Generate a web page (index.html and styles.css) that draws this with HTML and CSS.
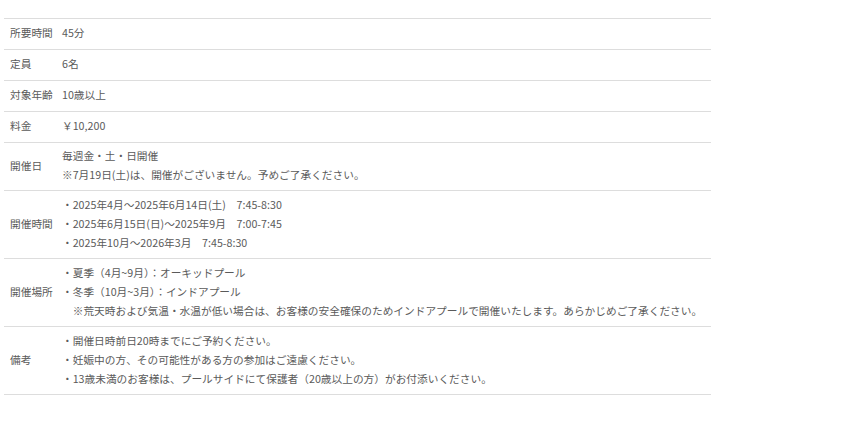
FILE: index.html
```html
<!DOCTYPE html>
<html lang="ja">
<head>
<meta charset="utf-8">
<link rel="stylesheet" href="styles.css">
</head>
<body>
<div class="wrap">
<table class="info">
<tr><th>所要時間</th><td>45分</td></tr>
<tr><th>定員</th><td>6名</td></tr>
<tr><th>対象年齢</th><td>10歳以上</td></tr>
<tr><th>料金</th><td>￥10,200</td></tr>
<tr><th>開催日</th><td class="two">毎週金・土・日開催<br>※7月19日(土)は、開催がございません。予めご了承ください。</td></tr>
<tr><th>開催時間</th><td><ul class="list">
<li>・2025年4月～2025年6月14日(土)　7:45-8:30</li>
<li>・2025年6月15日(日)～2025年9月　7:00-7:45</li>
<li>・2025年10月～2026年3月　7:45-8:30</li>
</ul></td></tr>
<tr><th>開催場所</th><td><ul class="list">
<li>・夏季（4月~9月）：オーキッドプール</li>
<li>・冬季（10月~3月）：インドアプール</li>
<li class="note">※荒天時および気温・水温が低い場合は、お客様の安全確保のためインドアプールで開催いたします。あらかじめご了承ください。</li>
</ul></td></tr>
<tr><th>備考</th><td><ul class="list">
<li>・開催日時前日20時までにご予約ください。</li>
<li>・妊娠中の方、その可能性がある方の参加はご遠慮ください。</li>
<li>・13歳未満のお客様は、プールサイドにて保護者（20歳以上の方）がお付添いください。</li>
</ul></td></tr>
</table>
</div>
</body>
</html>
```
FILE: styles.css
```css
html, body {
  margin: 0;
  padding: 0;
  background: #fff;
}
.wrap {
  padding: 18px 0 0 4px;
}
.info {
  width: 707px;
  border-collapse: collapse;
  font-family: "Noto Sans CJK JP", "Noto Sans", sans-serif;
  font-size: 10.7px;
  color: #5a5a5a;
  border-top: 1px solid #ddd;
}
.info tr {
  border-bottom: 1px solid #ddd;
}
.info th, .info td {
  padding: 4px 0 6px;
  line-height: 20px;
  vertical-align: middle;
  text-align: left;
  font-weight: normal;
}
.info th {
  width: 52px;
  padding-left: 6px;
  white-space: nowrap;
}
.info td.two {
  line-height: 18.5px;
}
.list {
  list-style: none;
  margin: 0;
  padding: 0;
}
.list li {
  line-height: 19px;
}
.list li.note {
  padding-left: 10.7px;
}
```
